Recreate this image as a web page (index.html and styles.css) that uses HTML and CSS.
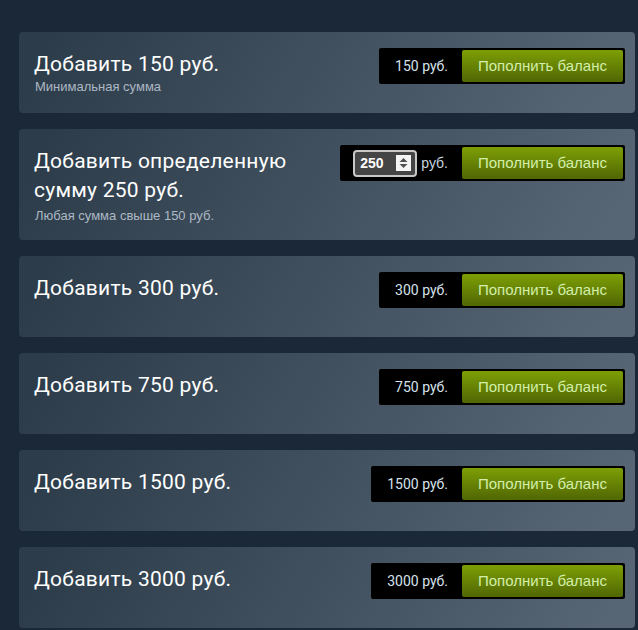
FILE: index.html
```html
<!DOCTYPE html>
<html lang="ru">
<head>
<meta charset="utf-8">
<title>Пополнение баланса</title>
<link rel="stylesheet" href="styles.css">
</head>
<body>
<div class="funds">
  <div class="card">
    <div class="info">
      <h1 class="title">Добавить 150 руб.</h1>
      <p class="sub">Минимальная сумма</p>
    </div>
    <div class="action">
      <span class="price">150 руб.</span>
      <a class="btn">Пополнить баланс</a>
    </div>
  </div>

  <div class="card">
    <div class="info">
      <h1 class="title">Добавить определенную сумму 250 руб.</h1>
      <p class="sub sub-wide">Любая сумма свыше 150 руб.</p>
    </div>
    <div class="action">
      <div class="amount">
        <span class="amount-value">250</span>
        <span class="spin"><svg width="15" height="16" viewBox="0 0 15 16"><rect width="15" height="16" fill="#f4f4f4"/><path d="M3.5 7 L7.5 3 L11.5 7 Z" fill="#505050"/><path d="M3.5 9 L11.5 9 L7.5 13 Z" fill="#505050"/></svg></span>
      </div>
      <span class="cur">руб.</span>
      <a class="btn">Пополнить баланс</a>
    </div>
  </div>

  <div class="card">
    <div class="info">
      <h1 class="title">Добавить 300 руб.</h1>
    </div>
    <div class="action">
      <span class="price">300 руб.</span>
      <a class="btn">Пополнить баланс</a>
    </div>
  </div>

  <div class="card">
    <div class="info">
      <h1 class="title">Добавить 750 руб.</h1>
    </div>
    <div class="action">
      <span class="price">750 руб.</span>
      <a class="btn">Пополнить баланс</a>
    </div>
  </div>

  <div class="card">
    <div class="info">
      <h1 class="title">Добавить 1500 руб.</h1>
    </div>
    <div class="action">
      <span class="price">1500 руб.</span>
      <a class="btn">Пополнить баланс</a>
    </div>
  </div>

  <div class="card">
    <div class="info">
      <h1 class="title">Добавить 3000 руб.</h1>
    </div>
    <div class="action">
      <span class="price">3000 руб.</span>
      <a class="btn">Пополнить баланс</a>
    </div>
  </div>
</div>
</body>
</html>
```

FILE: styles.css
```css
html, body {
  margin: 0;
  padding: 0;
  background: #1b2838;
}

body {
  font-family: "Liberation Sans", Arial, sans-serif;
  color: #c6d4df;
}

.funds {
  display: flex;
  flex-direction: column;
  gap: 16px;
  width: 616px;
  margin: 32px 0 0 19px;
}

.card {
  display: flex;
  justify-content: space-between;
  align-items: flex-start;
  box-sizing: border-box;
  min-height: 81px;
  padding: 16px 10px 16px 15px;
  border-radius: 4px;
  background: linear-gradient(-60deg, rgba(226, 244, 255, 0.3) 5%, rgba(84, 107, 115, 0.3) 95%);
}

.info {
  flex: 1;
  min-width: 0;
  padding-top: 2px;
  padding-right: 24px;
}

.title {
  margin: 0;
  font-family: Roboto, "Liberation Sans", sans-serif;
  font-weight: 400;
  font-size: 21px;
  line-height: 29px;
  letter-spacing: 0.25px;
  color: #ffffff;
}

.sub {
  margin: 0 0 0 1px;
  font-size: 13px;
  line-height: 16px;
  color: #acb8c4;
}

.sub-wide {
  margin-top: 3px;
}

.action {
  display: flex;
  align-items: center;
  flex-shrink: 0;
  box-sizing: border-box;
  height: 36px;
  padding: 2px;
  background: #000000;
  border-radius: 2px;
}

.price {
  padding: 0 14px;
  font-family: Roboto, "Liberation Sans", sans-serif;
  font-size: 14px;
  color: #d6e2ec;
}

.btn {
  display: block;
  height: 32px;
  padding: 0 16px;
  line-height: 32px;
  font-size: 15px;
  color: #d2efa9;
  border-radius: 2px;
  background: linear-gradient(to bottom, #7b9c05 5%, #526904 95%);
  cursor: pointer;
}

.amount {
  display: flex;
  align-items: center;
  box-sizing: border-box;
  width: 64px;
  height: 27px;
  margin-left: 11px;
  padding: 0 4px 0 5px;
  border: 2px solid #c8c8c8;
  border-radius: 4px;
  background: #454545;
}

.amount-value {
  flex: 1;
  font-size: 14px;
  font-weight: 700;
  color: #ffffff;
}

.spin {
  display: flex;
}

.cur {
  padding: 0 14px 0 4px;
  font-size: 14px;
  color: #c6d4df;
}
```
